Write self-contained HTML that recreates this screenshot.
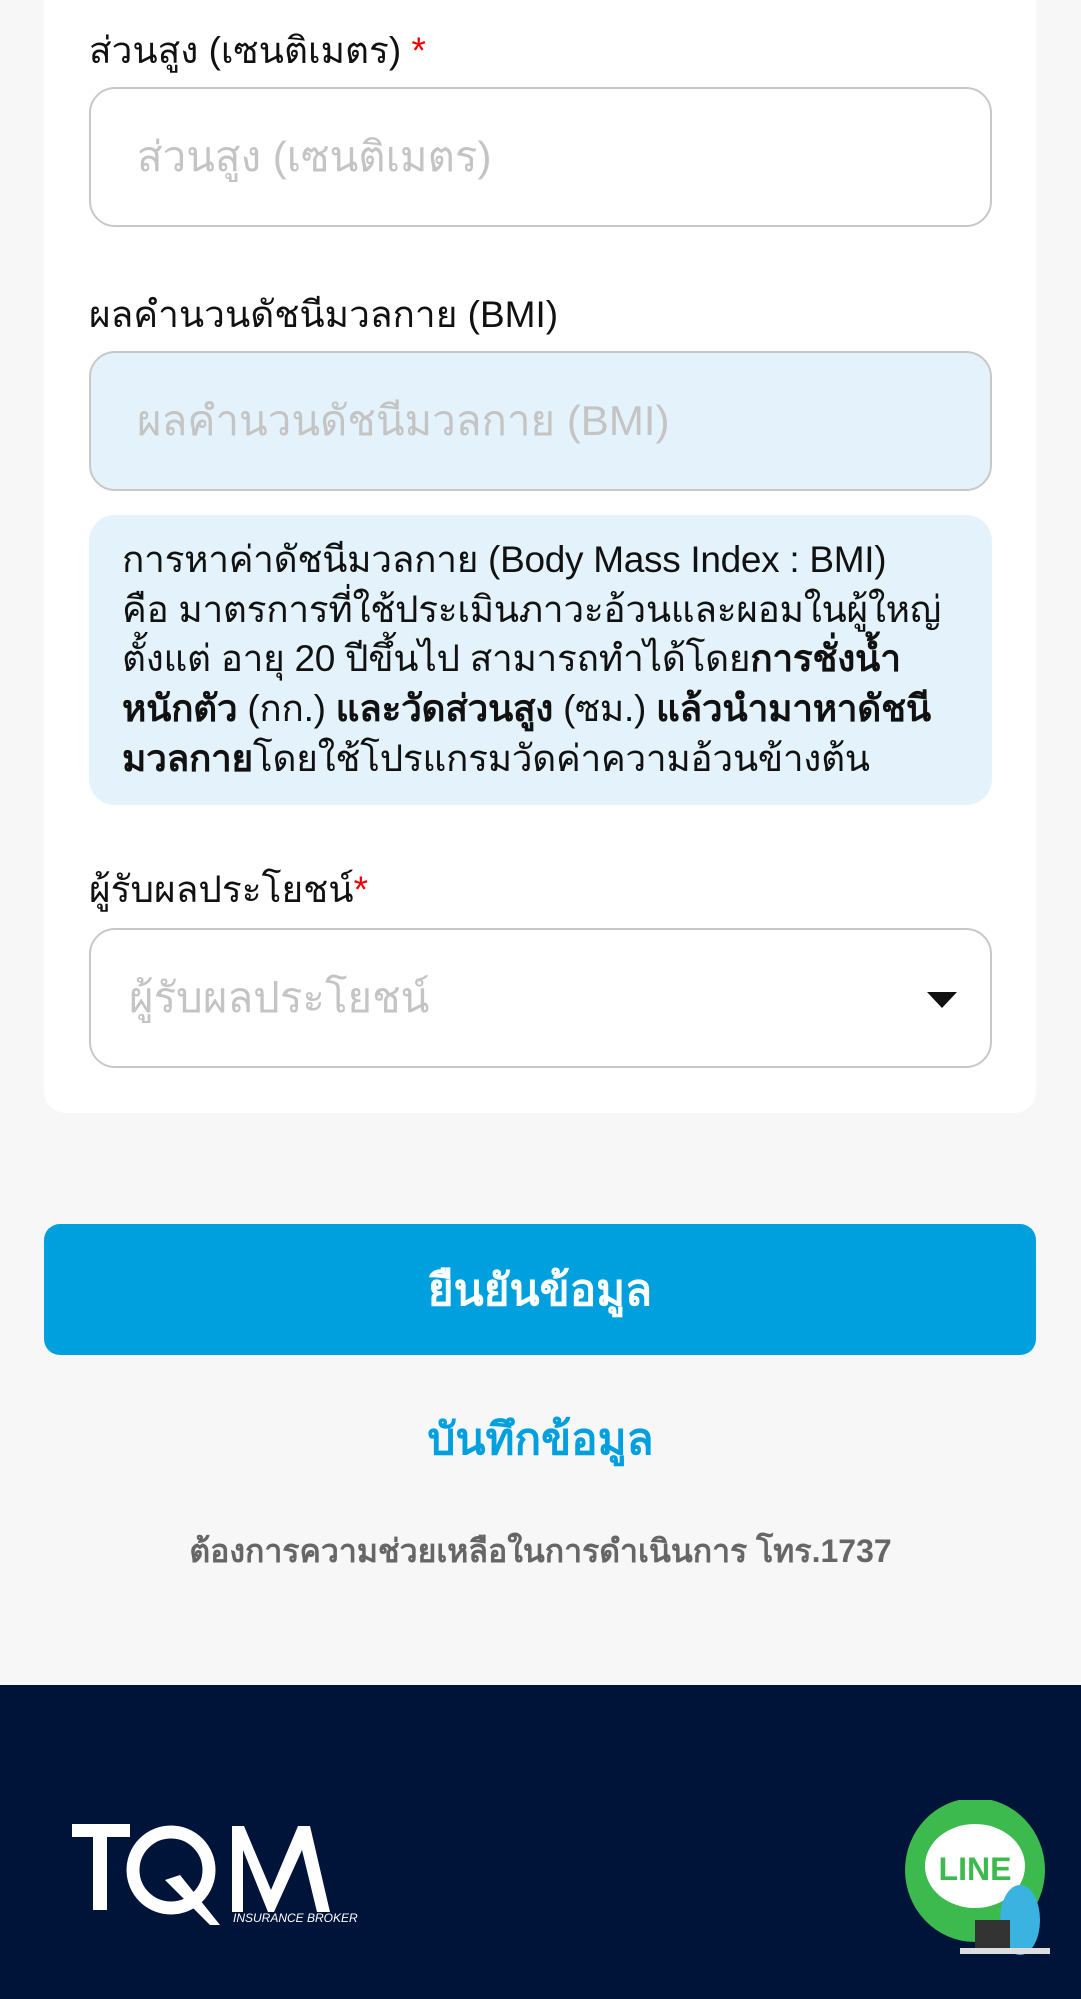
<!DOCTYPE html>
<html><head><meta charset="utf-8"><style>
*{box-sizing:border-box;margin:0;padding:0}
body{width:1081px;height:1999px;background:#f7f7f7;font-family:"Liberation Sans",sans-serif;position:relative;overflow:hidden;color:#111}
.abs{position:absolute}
.card{left:44px;top:-30px;width:992px;height:1143px;background:#fff;border-radius:22px}
.lbl{left:89px;font-size:37px;line-height:44px;white-space:nowrap}
.req{color:#e00}
.inp{left:89px;width:903px;height:140px;border:2px solid #c8c8c8;border-radius:26px;background:#fff;font-size:42px;color:#c4c4c4;padding-left:46px;display:flex;align-items:center;white-space:nowrap}
.info{left:89px;top:515px;width:903px;height:290px;background:#e4f3fb;border-radius:26px;padding:20px 0 0 33px;font-size:37px;line-height:49.7px;color:#111;white-space:nowrap;letter-spacing:-0.3px}
.btn{left:44px;top:1224px;width:992px;height:131px;background:#00a0df;border-radius:16px;color:#fff;font-weight:bold;font-size:44px;display:flex;align-items:center;justify-content:center}
.foot{left:0;top:1685px;width:1081px;height:314px;background:#00143a}
</style></head><body>
<div class="abs card"></div>
<div class="abs lbl" style="top:29px">ส่วนสูง (เซนติเมตร) <span class="req">*</span></div>
<div class="abs inp" style="top:87px">ส่วนสูง (เซนติเมตร)</div>
<div class="abs lbl" style="top:293px">ผลคำนวนดัชนีมวลกาย (BMI)</div>
<div class="abs inp" style="top:351px;background:#e4f3fb">ผลคำนวนดัชนีมวลกาย (BMI)</div>
<div class="abs info">การหาค่าดัชนีมวลกาย (Body Mass Index : BMI)<br>คือ มาตรการที่ใช้ประเมินภาวะอ้วนและผอมในผู้ใหญ่<br>ตั้งแต่ อายุ 20 ปีขึ้นไป สามารถทำได้โดย<b>การชั่งน้ำ</b><br><b>หนักตัว</b> (กก.) <b>และวัดส่วนสูง</b> (ซม.) <b>แล้วนำมาหาดัชนี</b><br><b>มวลกาย</b>โดยใช้โปรแกรมวัดค่าความอ้วนข้างต้น</div>
<div class="abs lbl" style="top:868px">ผู้รับผลประโยชน์<span class="req">*</span></div>
<div class="abs inp" style="top:928px;padding-left:38px">ผู้รับผลประโยชน์
<svg class="abs" style="left:836px;top:62px" width="30" height="16" viewBox="0 0 30 16"><path d="M0 0H30L15 16Z" fill="#111"/></svg></div>
<div class="abs btn">ยืนยันข้อมูล</div>
<div class="abs" style="left:0;width:1081px;top:1412px;text-align:center;font-size:44px;font-weight:bold;color:#009fde;line-height:56px">บันทึกข้อมูล</div>
<div class="abs" style="left:0;width:1081px;top:1531px;text-align:center;font-size:32px;font-weight:bold;color:#666;line-height:40px">ต้องการความช่วยเหลือในการดำเนินการ โทร.1737</div>
<div class="abs foot"></div>
<svg class="abs" style="left:70px;top:1820px" width="300" height="110" viewBox="0 0 300 110">
<g fill="#fff"><rect x="2" y="4" width="58" height="13"/><rect x="23" y="4" width="14" height="86"/>
<circle cx="101" cy="50" r="38" fill="none" stroke="#fff" stroke-width="13"/>
<path d="M95 60L140 105H150L110 55Z"/>
<path d="M162 92V6H174L201 70L228 6H240L260 92H247L232 30L204 92H198L173 30V92Z"/>
<text x="163" y="102" font-size="12" font-family="Liberation Sans" font-style="italic">INSURANCE BROKER</text></g></svg>
<svg class="abs" style="left:900px;top:1800px" width="150" height="160" viewBox="0 0 150 160">
<ellipse cx="75" cy="70" rx="70" ry="72" fill="#3dba4e"/>
<ellipse cx="75" cy="66" rx="50" ry="42" fill="#fff"/>
<text x="75" y="80" text-anchor="middle" font-size="32" font-weight="bold" fill="#3dba4e" font-family="Liberation Sans">LINE</text>
<ellipse cx="120" cy="120" rx="20" ry="35" fill="#3bb3e0"/>
<rect x="75" y="120" width="35" height="28" fill="#333"/>
<rect x="60" y="148" width="90" height="6" fill="#ddd"/></svg>
</body></html>
